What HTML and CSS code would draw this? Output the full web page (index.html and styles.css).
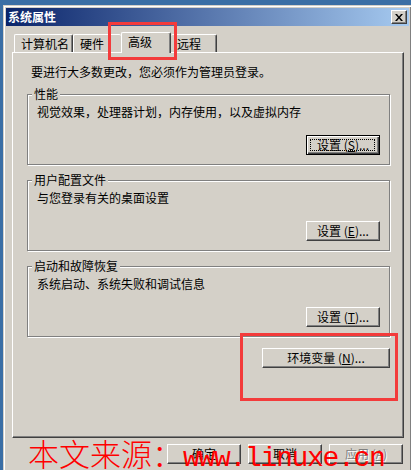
FILE: index.html
```html
<!DOCTYPE html>
<html lang="zh-CN">
<head>
  <meta charset="UTF-8" />
  <meta name="viewport" content="width=device-width, initial-scale=1.0"/>
  <title>系统属性</title>
  <link rel="stylesheet" href="styles.css">
</head>
<body>
  <div class="window">
    <div class="titlebar">
      <span class="title">系统属性</span>
      <span class="close">
        <svg width="8" height="7" viewBox="0 0 8 7"><path d="M0 0h2l2 2.4L6 0h2L5 3.5 8 7H6L4 4.6 2 7H0l3-3.5z"/></svg>
      </span>
    </div>

    <div class="dialog">
      <div class="tabs">
        <div class="tab tab-first">计算机名</div>
        <div class="tab tab-prev">硬件</div>
        <div class="tab active">高级</div>
        <div class="tab tab-next">远程</div>
      </div>

      <div class="panel">
        <p class="note">要进行大多数更改，您必须作为管理员登录。</p>

        <fieldset class="group">
          <legend>性能</legend>
          <p>视觉效果，处理器计划，内存使用，以及虚拟内存</p>
          <div class="row"><button class="btn default">设置 (<u>S</u>)...</button></div>
        </fieldset>

        <fieldset class="group">
          <legend>用户配置文件</legend>
          <p>与您登录有关的桌面设置</p>
          <div class="row"><button class="btn">设置 (<u>E</u>)...</button></div>
        </fieldset>

        <fieldset class="group">
          <legend>启动和故障恢复</legend>
          <p>系统启动、系统失败和调试信息</p>
          <div class="row"><button class="btn">设置 (<u>T</u>)...</button></div>
        </fieldset>

        <div class="row env"><button class="btn wide">环境变量 (<u>N</u>)...</button></div>
      </div>

      <div class="actions">
        <button class="btn">确定</button>
        <button class="btn">取消</button>
        <button class="btn" disabled>应用 (<u>A</u>)</button>
      </div>
    </div>
  </div>

  <!-- 标注框 -->
  <div class="mark mark-tab"></div>
  <div class="mark mark-env"></div>

  <div class="watermark">本文来源：<span class="url">www.linuxe.cn</span></div>
</body>
</html>
```

FILE: styles.css
```css
* {
  box-sizing: border-box;
  margin: 0;
  padding: 0;
}

body {
  background: #3a6ea5;
  height: 100vh;
  padding: 5px 0 0 3px;
  overflow: hidden;
  position: relative;
  font-family: "Noto Sans CJK SC", "Liberation Sans", sans-serif;
  font-size: 12px;
  color: #000;
}

.window {
  width: 409px;
  height: 480px;
  background: #d4d0c8;
  border: 1px solid;
  border-color: #d4d0c8 #404040 #404040 #d4d0c8;
  box-shadow: inset 1px 1px #fff, inset -1px -1px #808080;
  padding: 2px;
}

.titlebar {
  height: 18px;
  display: flex;
  align-items: center;
  justify-content: space-between;
  padding: 0 2px 0 2px;
  background: linear-gradient(to right, #0a246a, #a6caf0);
}

.title {
  color: #fff;
  font-weight: bold;
  line-height: 14px;
}

.close {
  width: 16px;
  height: 14px;
  display: flex;
  align-items: center;
  justify-content: center;
  background: #d4d0c8;
  border: 1px solid;
  border-color: #fff #404040 #404040 #fff;
  box-shadow: inset -1px -1px #808080;
}

.close svg {
  fill: #000;
}

.dialog {
  padding: 6px 5px 0 6px;
}

/* 选项卡 */
.tabs {
  height: 20px;
  display: flex;
  align-items: flex-end;
  padding-left: 2px;
}

.tab {
  height: 18px;
  display: flex;
  align-items: center;
  padding-left: 6px;
  line-height: 14px;
  border-top: 1px solid #fff;
  border-left: 1px solid #fff;
  border-right: 1px solid #404040;
  border-radius: 2px 2px 0 0;
  box-shadow: inset -1px 0 #808080;
}

.tab-first { width: 59px; }
.tab-prev { width: 48px; border-right: none; box-shadow: none; }
.tab-next { width: 46px; border-left: none; padding-left: 6px; }

.tab.active {
  width: 50px;
  height: 21px;
  margin-bottom: -1px;
  padding-bottom: 3px;
  background: #d4d0c8;
  position: relative;
  z-index: 1;
}

.panel {
  height: 386px;
  border: 1px solid;
  border-color: #fff #404040 #404040 #fff;
  box-shadow: inset -1px -1px #808080;
}

.note {
  margin: 12px 0 0 18px;
  line-height: 14px;
}

/* 分组框 */
.group {
  margin: 8px 13px 0 14px;
  padding: 4px 9px 9px 9px;
  border: 1px solid #808080;
  box-shadow: inset 1px 1px #fff, 1px 1px #fff;
  min-width: 0;
}

.group legend {
  margin-left: -5px;
  padding: 0 2px;
  line-height: 14px;
  background: #d4d0c8;
}

.group p {
  line-height: 14px;
}

.row {
  display: flex;
  justify-content: flex-end;
  margin-top: 16px;
}

.row.env {
  margin: 11px 13px 0 0;
}

/* 按钮 */
.btn {
  width: 74px;
  height: 20px;
  font-family: inherit;
  font-size: 12px;
  line-height: 14px;
  color: #000;
  background: #d4d0c8;
  border: 1px solid;
  border-color: #fff #404040 #404040 #fff;
  box-shadow: inset -1px -1px #808080;
  position: relative;
}

.btn u {
  text-underline-offset: 1px;
}

.btn.wide {
  width: 128px;
}

.btn.default {
  border-color: #000;
  box-shadow: inset 1px 1px #fff, inset -1px -1px #404040, inset -2px -2px #808080;
}

.btn.default::after {
  content: "";
  position: absolute;
  inset: 3px 4px 3px 3px;
  border: 1px dotted #000;
}

.btn:disabled {
  color: #808080;
  text-shadow: 1px 1px #fff;
}

.actions {
  display: flex;
  justify-content: flex-end;
  gap: 7px;
  margin-top: 6px;
  padding-right: 1px;
}

/* 红色标注 */
.mark {
  position: absolute;
  border: 3px solid #f33b3b;
}

.mark-tab {
  left: 108px;
  top: 22px;
  width: 69px;
  height: 38px;
}

.mark-env {
  left: 240px;
  top: 333px;
  width: 158px;
  height: 68px;
}

.watermark {
  position: absolute;
  left: 28px;
  top: 437px;
  font-size: 31px;
  font-weight: 300;
  line-height: 31px;
  color: #f00;
  white-space: nowrap;
}

.watermark .url {
  font-family: "Liberation Mono", monospace;
  font-size: 28px;
  font-weight: normal;
  letter-spacing: -1.3px;
}
```
